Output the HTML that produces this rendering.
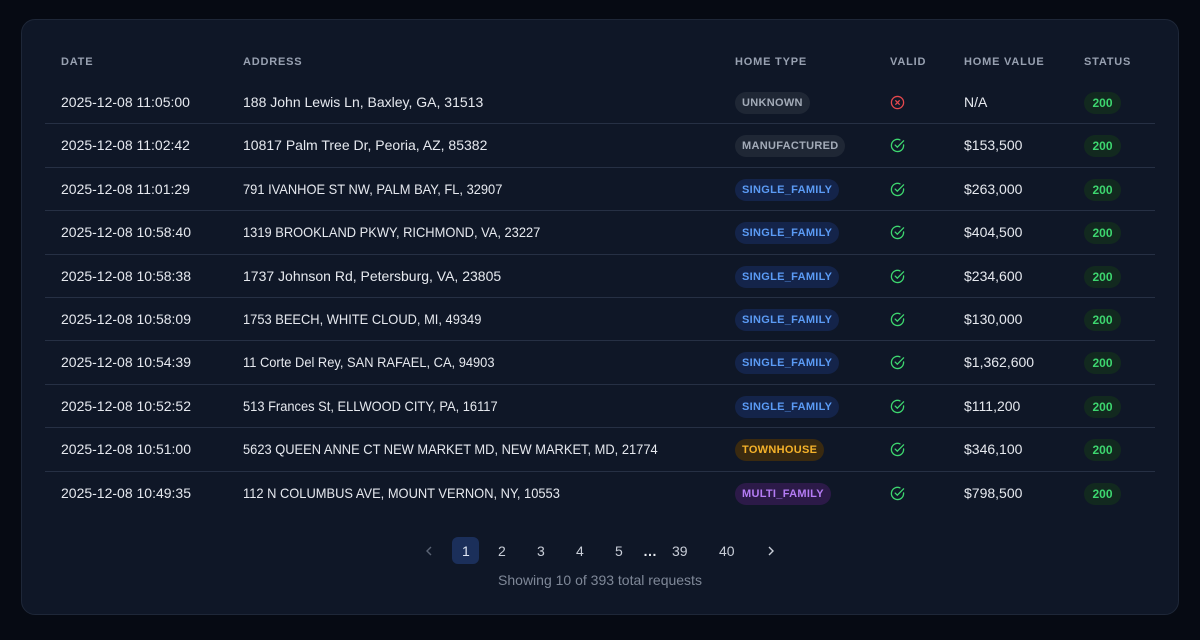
<!DOCTYPE html>
<html><head><meta charset="utf-8"><style>
*{margin:0;padding:0;box-sizing:border-box}
body{width:1200px;height:640px;background:#060a13;font-family:"Liberation Sans",sans-serif;position:relative;overflow:hidden}
.card{position:absolute;left:21px;top:19px;width:1158px;height:596px;background:#0f1727;border:1px solid #1e2738;border-radius:14px}
.h{position:absolute;top:56px;font-size:11px;font-weight:bold;letter-spacing:0.8px;color:#98a1b1}
.row{position:absolute;left:45px;width:1110px;height:43.4px}
.row.sep{border-bottom:1px solid #263044}
.c{position:absolute;top:0;line-height:43px;font-size:14px;color:#e6e9ef;white-space:nowrap}
.u{transform:scaleX(0.92);transform-origin:left center}
.pill{position:absolute;top:11px;height:22px;line-height:22px;padding:0 7px;border-radius:11px;font-size:11px;font-weight:bold;letter-spacing:0.3px}
.gray{background:#1f2735;color:#a3abb8}
.blue{background:#14244a;color:#5b9bf5}
.yel{background:#3a2a10;color:#f5b22a}
.pur{background:#2c1a48;color:#b57cf5}
.st{position:absolute;left:1039px;top:11px;height:22px;line-height:22px;width:37px;text-align:center;border-radius:11px;background:#12291f;color:#3dd66f;font-size:12px;font-weight:bold}
.ic{position:absolute;left:845px;top:14px}
.pg{position:absolute;top:540px;font-size:14px;color:#c9ced8;line-height:22px}
</style></head><body>
<div class="card"></div>
<div class="h" style="left:61px">DATE</div>
<div class="h" style="left:243px">ADDRESS</div>
<div class="h" style="left:735px">HOME TYPE</div>
<div class="h" style="left:890px">VALID</div>
<div class="h" style="left:964px">HOME VALUE</div>
<div class="h" style="left:1084px">STATUS</div>

<div class="row sep" style="top:81px"><div class="c" style="left:16px">2025-12-08 11:05:00</div><div class="c" style="left:198px">188 John Lewis Ln, Baxley, GA, 31513</div><span class="pill gray" style="left:690px">UNKNOWN</span><svg class="ic" width="15" height="15" viewBox="0 0 16 16"><circle cx="8" cy="8" r="6.5" fill="none" stroke="#e5484d" stroke-width="1.4"/><path d="M5.7 5.7l4.6 4.6M10.3 5.7l-4.6 4.6" stroke="#e5484d" stroke-width="1.4"/></svg><div class="c" style="left:919px">N/A</div><span class="st">200</span></div>

<div class="row sep" style="top:124.4px"><div class="c" style="left:16px">2025-12-08 11:02:42</div><div class="c" style="left:198px">10817 Palm Tree Dr, Peoria, AZ, 85382</div><span class="pill gray" style="left:690px">MANUFACTURED</span><svg class="ic" width="15" height="15" viewBox="0 0 16 16"><path d="M14.5 7.4V8a6.5 6.5 0 1 1-3.9-6" fill="none" stroke="#3dd66f" stroke-width="1.4" stroke-linecap="round"/><path d="M5.5 7.5l2.3 2.3L14.5 3" fill="none" stroke="#3dd66f" stroke-width="1.4" stroke-linecap="round"/></svg><div class="c" style="left:919px">$153,500</div><span class="st">200</span></div>

<div class="row sep" style="top:167.8px"><div class="c" style="left:16px">2025-12-08 11:01:29</div><div class="c u" style="left:198px">791 IVANHOE ST NW, PALM BAY, FL, 32907</div><span class="pill blue" style="left:690px">SINGLE_FAMILY</span><svg class="ic" width="15" height="15" viewBox="0 0 16 16"><path d="M14.5 7.4V8a6.5 6.5 0 1 1-3.9-6" fill="none" stroke="#3dd66f" stroke-width="1.4" stroke-linecap="round"/><path d="M5.5 7.5l2.3 2.3L14.5 3" fill="none" stroke="#3dd66f" stroke-width="1.4" stroke-linecap="round"/></svg><div class="c" style="left:919px">$263,000</div><span class="st">200</span></div>

<div class="row sep" style="top:211.2px"><div class="c" style="left:16px">2025-12-08 10:58:40</div><div class="c u" style="left:198px">1319 BROOKLAND PKWY, RICHMOND, VA, 23227</div><span class="pill blue" style="left:690px">SINGLE_FAMILY</span><svg class="ic" width="15" height="15" viewBox="0 0 16 16"><path d="M14.5 7.4V8a6.5 6.5 0 1 1-3.9-6" fill="none" stroke="#3dd66f" stroke-width="1.4" stroke-linecap="round"/><path d="M5.5 7.5l2.3 2.3L14.5 3" fill="none" stroke="#3dd66f" stroke-width="1.4" stroke-linecap="round"/></svg><div class="c" style="left:919px">$404,500</div><span class="st">200</span></div>

<div class="row sep" style="top:254.6px"><div class="c" style="left:16px">2025-12-08 10:58:38</div><div class="c" style="left:198px">1737 Johnson Rd, Petersburg, VA, 23805</div><span class="pill blue" style="left:690px">SINGLE_FAMILY</span><svg class="ic" width="15" height="15" viewBox="0 0 16 16"><path d="M14.5 7.4V8a6.5 6.5 0 1 1-3.9-6" fill="none" stroke="#3dd66f" stroke-width="1.4" stroke-linecap="round"/><path d="M5.5 7.5l2.3 2.3L14.5 3" fill="none" stroke="#3dd66f" stroke-width="1.4" stroke-linecap="round"/></svg><div class="c" style="left:919px">$234,600</div><span class="st">200</span></div>

<div class="row sep" style="top:298px"><div class="c" style="left:16px">2025-12-08 10:58:09</div><div class="c u" style="left:198px">1753 BEECH, WHITE CLOUD, MI, 49349</div><span class="pill blue" style="left:690px">SINGLE_FAMILY</span><svg class="ic" width="15" height="15" viewBox="0 0 16 16"><path d="M14.5 7.4V8a6.5 6.5 0 1 1-3.9-6" fill="none" stroke="#3dd66f" stroke-width="1.4" stroke-linecap="round"/><path d="M5.5 7.5l2.3 2.3L14.5 3" fill="none" stroke="#3dd66f" stroke-width="1.4" stroke-linecap="round"/></svg><div class="c" style="left:919px">$130,000</div><span class="st">200</span></div>

<div class="row sep" style="top:341.4px"><div class="c" style="left:16px">2025-12-08 10:54:39</div><div class="c u" style="left:198px">11 Corte Del Rey, SAN RAFAEL, CA, 94903</div><span class="pill blue" style="left:690px">SINGLE_FAMILY</span><svg class="ic" width="15" height="15" viewBox="0 0 16 16"><path d="M14.5 7.4V8a6.5 6.5 0 1 1-3.9-6" fill="none" stroke="#3dd66f" stroke-width="1.4" stroke-linecap="round"/><path d="M5.5 7.5l2.3 2.3L14.5 3" fill="none" stroke="#3dd66f" stroke-width="1.4" stroke-linecap="round"/></svg><div class="c" style="left:919px">$1,362,600</div><span class="st">200</span></div>

<div class="row sep" style="top:384.8px"><div class="c" style="left:16px">2025-12-08 10:52:52</div><div class="c u" style="left:198px">513 Frances St, ELLWOOD CITY, PA, 16117</div><span class="pill blue" style="left:690px">SINGLE_FAMILY</span><svg class="ic" width="15" height="15" viewBox="0 0 16 16"><path d="M14.5 7.4V8a6.5 6.5 0 1 1-3.9-6" fill="none" stroke="#3dd66f" stroke-width="1.4" stroke-linecap="round"/><path d="M5.5 7.5l2.3 2.3L14.5 3" fill="none" stroke="#3dd66f" stroke-width="1.4" stroke-linecap="round"/></svg><div class="c" style="left:919px">$111,200</div><span class="st">200</span></div>

<div class="row sep" style="top:428.2px"><div class="c" style="left:16px">2025-12-08 10:51:00</div><div class="c u" style="left:198px">5623 QUEEN ANNE CT NEW MARKET MD, NEW MARKET, MD, 21774</div><span class="pill yel" style="left:690px">TOWNHOUSE</span><svg class="ic" width="15" height="15" viewBox="0 0 16 16"><path d="M14.5 7.4V8a6.5 6.5 0 1 1-3.9-6" fill="none" stroke="#3dd66f" stroke-width="1.4" stroke-linecap="round"/><path d="M5.5 7.5l2.3 2.3L14.5 3" fill="none" stroke="#3dd66f" stroke-width="1.4" stroke-linecap="round"/></svg><div class="c" style="left:919px">$346,100</div><span class="st">200</span></div>

<div class="row" style="top:471.6px"><div class="c" style="left:16px">2025-12-08 10:49:35</div><div class="c u" style="left:198px">112 N COLUMBUS AVE, MOUNT VERNON, NY, 10553</div><span class="pill pur" style="left:690px">MULTI_FAMILY</span><svg class="ic" width="15" height="15" viewBox="0 0 16 16"><path d="M14.5 7.4V8a6.5 6.5 0 1 1-3.9-6" fill="none" stroke="#3dd66f" stroke-width="1.4" stroke-linecap="round"/><path d="M5.5 7.5l2.3 2.3L14.5 3" fill="none" stroke="#3dd66f" stroke-width="1.4" stroke-linecap="round"/></svg><div class="c" style="left:919px">$798,500</div><span class="st">200</span></div>

<svg style="position:absolute;left:424px;top:545px" width="10" height="12" viewBox="0 0 10 12"><path d="M7 2L3 6l4 4" fill="none" stroke="#5a6374" stroke-width="1.4"/></svg>
<div style="position:absolute;left:452px;top:537px;width:27px;height:27px;border-radius:6px;background:#1b2f5a"></div>
<div class="pg" style="left:462px;color:#dfe6f3">1</div>
<div class="pg" style="left:498px">2</div>
<div class="pg" style="left:537px">3</div>
<div class="pg" style="left:576px">4</div>
<div class="pg" style="left:615px">5</div>
<div class="pg" style="left:643px;font-weight:bold;color:#e6e9ef">…</div>
<div class="pg" style="left:672px">39</div>
<div class="pg" style="left:719px">40</div>
<svg style="position:absolute;left:766px;top:545px" width="10" height="12" viewBox="0 0 10 12"><path d="M3 2l4 4-4 4" fill="none" stroke="#c9ced8" stroke-width="1.4"/></svg>
<div style="position:absolute;left:0;width:1200px;top:572px;text-align:center;font-size:14px;color:#7f8898">Showing 10 of 393 total requests</div>
</body></html>
